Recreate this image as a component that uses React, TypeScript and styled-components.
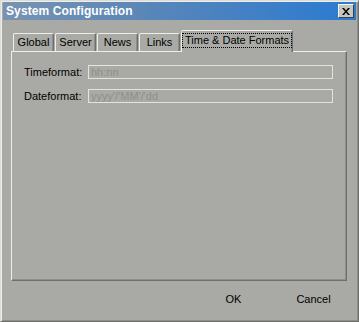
import React, { useState } from "react";
import styled, { createGlobalStyle } from "styled-components";

const GlobalStyle = createGlobalStyle`
  html, body {
    margin: 0;
    padding: 0;
    background: #a9aaa5;
  }
  * { box-sizing: border-box; }
`;

const tabs = ["Global", "Server", "News", "Links", "Time & Date Formats"];

const App: React.FC = () => {
  const [active, setActive] = useState(4);

  return (
    <>
      <GlobalStyle />
      <Window>
        <TitleBar>
          <Title>System Configuration</Title>
          <CloseButton aria-label="close">
            <svg width="8" height="7" viewBox="0 0 8 7">
              <path d="M0 0h2l2 2.5L6 0h2L5 3.5 8 7H6L4 4.5 2 7H0l3-3.5z" fill="#000" />
            </svg>
          </CloseButton>
        </TitleBar>
        <Body>
          <TabStrip>
            {tabs.map((t, i) => (
              <Tab key={t} $active={i === active} onClick={() => setActive(i)}>
                <TabLabel $active={i === active}>{t}</TabLabel>
              </Tab>
            ))}
          </TabStrip>
          <Panel>
            <Row>
              <Label>Timeformat:</Label>
              <Field value="hh:nn" disabled readOnly />
            </Row>
            <Row>
              <Label>Dateformat:</Label>
              <Field value="yyyy'/'MM'/'dd" disabled readOnly />
            </Row>
          </Panel>
        </Body>
        <Footer>
          <FlatButton>OK</FlatButton>
          <FlatButton>Cancel</FlatButton>
        </Footer>
      </Window>
    </>
  );
};

const Window = styled.div`
  width: 359px;
  height: 322px;
  display: flex;
  flex-direction: column;
  background: #a9aaa5;
  border-left: 1px solid #dcddd8;
  border-top: 1px solid #dcddd8;
  border-right: 1px solid #6f706c;
  border-bottom: 1px solid #6f706c;
  box-shadow: inset 1px 1px 0 #eeeeea, inset -1px -1px 0 #8d8e89;
  padding: 1px 2px 2px 2px;
  font-family: "Liberation Sans", Arial, sans-serif;
  font-size: 11px;
  color: #000;
`;

const TitleBar = styled.div`
  height: 18px;
  display: flex;
  align-items: center;
  justify-content: space-between;
  padding: 0 2px 0 3px;
  background: linear-gradient(90deg, #7893b0 0%, #5a86b8 40%, #2a7bd2 100%);
`;

const Title = styled.span`
  color: #fff;
  font-weight: bold;
  font-size: 12px;
  letter-spacing: 0.1px;
`;

const CloseButton = styled.div`
  width: 16px;
  height: 14px;
  display: flex;
  align-items: center;
  justify-content: center;
  background: #c4c6c0;
  border-left: 1px solid #f4f4f0;
  border-top: 1px solid #f4f4f0;
  border-right: 1px solid #404040;
  border-bottom: 1px solid #404040;
`;

const Body = styled.div`
  padding: 9px 9px 0 8px;
  display: flex;
  flex-direction: column;
`;

const TabStrip = styled.div`
  display: flex;
  align-items: flex-end;
  height: 22px;
  padding-left: 2px;
  position: relative;
  z-index: 1;
`;

const Tab = styled.div<{ $active: boolean }>`
  height: ${(p) => (p.$active ? "22px" : "18px")};
  min-width: 41px;
  margin: ${(p) => (p.$active ? "0 -2px -1px 0" : "0 1px 0 0")};
  padding: ${(p) => (p.$active ? "3px 1px 0 1px" : "2px 0 0 0")};
  background: #a9aaa5;
  border-left: 1px solid #eeeee8;
  border-top: 1px solid #eeeee8;
  border-right: 1px solid #6f706c;
  border-radius: 2px 2px 0 0;
  box-shadow: inset -1px 0 0 #8d8e89;
  display: flex;
  align-items: flex-start;
  justify-content: center;
  font-size: 11px;
  line-height: 13px;
  cursor: default;
`;

const TabLabel = styled.span<{ $active: boolean }>`
  padding: 0 2px;
  outline: ${(p) => (p.$active ? "1px dotted #000" : "none")};
`;

const Panel = styled.div`
  height: 230px;
  border-left: 1px solid #eeeee8;
  border-top: 1px solid #eeeee8;
  border-right: 1px solid #6f706c;
  border-bottom: 1px solid #6f706c;
  box-shadow: inset -1px -1px 0 #8d8e89;
  padding: 13px 12px 0 12px;
  display: flex;
  flex-direction: column;
  gap: 10px;
`;

const Row = styled.div`
  display: flex;
  align-items: center;
  height: 14px;
`;

const Label = styled.span`
  width: 64px;
  font-size: 11px;
`;

const Field = styled.input`
  width: 245px;
  height: 14px;
  padding: 0 2px;
  margin: 0;
  border: 1px solid #e4e5d8;
  background: #a9aaa5;
  color: #8e8f8a;
  font-family: "Liberation Sans", Arial, sans-serif;
  font-size: 11px;
  outline: none;
`;

const Footer = styled.div`
  flex: 1;
  display: flex;
  justify-content: flex-end;
  align-items: center;
  gap: 5px;
  padding: 0 5px 3px 0;
`;

const FlatButton = styled.button`
  width: 75px;
  height: 23px;
  background: transparent;
  border: none;
  font-family: "Liberation Sans", Arial, sans-serif;
  font-size: 11px;
  color: #000;
  padding: 0;
`;

export default App;
